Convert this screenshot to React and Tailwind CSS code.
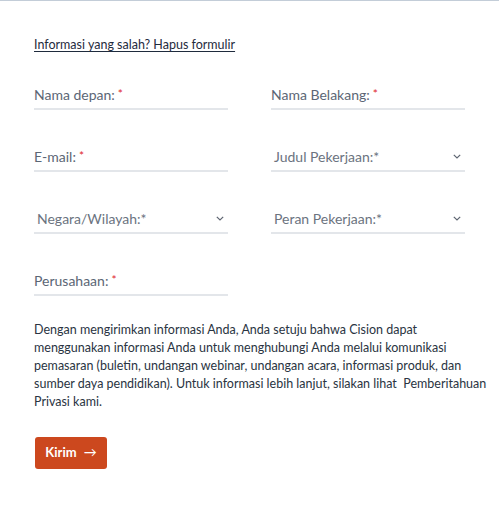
import React from 'react';

const Chevron = () => (
    <svg width="8" height="5" viewBox="0 0 8 5" fill="none" className="shrink-0">
        <path d="M0.8 0.8l3.2 3.2 3.2-3.2" stroke="#5f6672" strokeWidth="1.2" />
    </svg>
);

const TextField = ({ label }) => (
    <div className="h-[30px] border-b-2 border-[#e3e6ea] flex items-center">
        <span className="text-[14px] text-[#5b6675]">
            {label}
            <span className="text-[#e0262c] text-[12px] ml-[3px] relative top-[-2px]">*</span>
        </span>
    </div>
);

const SelectField = ({ label }) => (
    <div className="h-[30px] border-b-2 border-[#e3e6ea] flex items-center justify-between pl-[3px] pr-[4px]">
        <span className="text-[14px] text-[#6b7380]">{label}</span>
        <Chevron />
    </div>
);

const App = () => {
    return (
        <div className="min-h-[508px] bg-white border-t border-[#c3cdd8]" style={{ fontFamily: 'Lato, "Open Sans", sans-serif' }}>
            <div className="px-[34px] pt-[30px] w-[499px]">
                <a href="#" className="text-[12.5px] text-[#1f2b3d] underline underline-offset-2">
                    Informasi yang salah? Hapus formulir
                </a>

                <div className="grid grid-cols-2 gap-x-[43px] gap-y-[32px] mt-[25px]">
                    <TextField label="Nama depan:" />
                    <TextField label="Nama Belakang:" />
                    <TextField label="E-mail:" />
                    <SelectField label="Judul Pekerjaan:*" />
                    <SelectField label="Negara/Wilayah:*" />
                    <SelectField label="Peran Pekerjaan:*" />
                    <TextField label="Perusahaan:" />
                </div>

                <p className="mt-[25px] text-[12.5px] leading-[18px] text-[#2a3442] whitespace-nowrap">
                    Dengan mengirimkan informasi Anda, Anda setuju bahwa Cision dapat<br />
                    menggunakan informasi Anda untuk menghubungi Anda melalui komunikasi<br />
                    pemasaran (buletin, undangan webinar, undangan acara, informasi produk, dan<br />
                    sumber daya pendidikan). Untuk informasi lebih lanjut, silakan lihat{'\u00a0'} Pemberitahuan<br />
                    Privasi kami.
                </p>

                <button className="mt-[26px] ml-[1px] h-[32px] w-[72px] bg-[#cc481e] rounded-[3px] text-white text-[13px] font-bold flex items-center justify-center gap-[7px]">
                    Kirim
                    <span className="font-normal">→</span>
                </button>
            </div>
        </div>
    );
};

export default App;
